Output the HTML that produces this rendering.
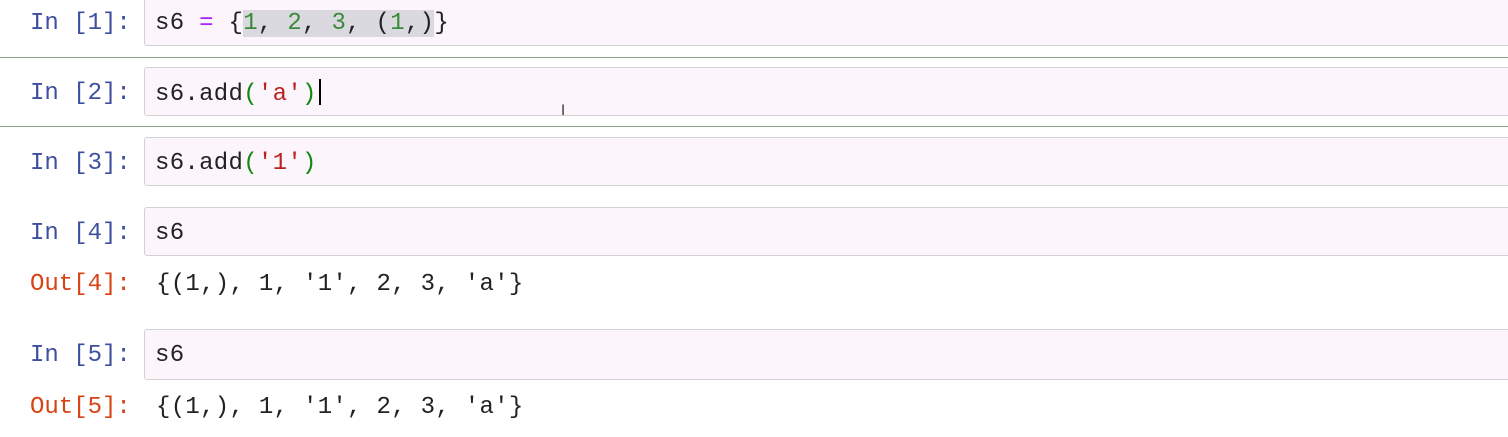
<!DOCTYPE html>
<html><head><style>
body{margin:0;width:1508px;height:437px;background:#fff;position:relative;overflow:hidden;font-family:"Liberation Mono","Courier New",monospace;font-size:24px;}
.box{position:absolute;left:144px;width:1380px;height:49px;background:#fcf5fc;border:1px solid #d2d2d2;border-radius:3px;box-sizing:border-box;}
.p{position:absolute;left:30px;color:#3f4f9f;line-height:30px;}
.o{color:#d84315}
.t{position:absolute;left:155px;line-height:30px;color:#222;letter-spacing:0.3px}
.g{position:absolute;left:0;width:1508px;height:1px;background:#86ab86;}
.n{color:#3a8a3a}.op{color:#aa22ff}.s{color:#ba2121}.br{color:#118811}
.sel{background:#d9d9df}
</style></head><body>
<div class="box" style="top:-3px"></div>
<div class="p" style="top:9px">In [1]:</div>
<div class="t" style="top:9px">s6 <span class="op">=</span> {<span class="sel"><span class="n">1</span>, <span class="n">2</span>, <span class="n">3</span>, (<span class="n">1</span>,)</span>}</div>
<div class="g" style="top:57px"></div>
<div class="box" style="top:67px"></div>
<div class="p" style="top:79px">In [2]:</div>
<div class="t" style="top:79px">s6.add<span class="br">(</span><span class="s">'a'</span><span class="br">)</span><span style="display:inline-block;width:2px;height:26px;background:#000;vertical-align:-5px;margin-left:2px"></span></div>
<div style="position:absolute;left:561px;top:103px;font-family:'DejaVu Sans';font-size:14px;color:#333">I</div>
<div class="g" style="top:126px"></div>
<div class="box" style="top:137px"></div>
<div class="p" style="top:149px">In [3]:</div>
<div class="t" style="top:149px">s6.add<span class="br">(</span><span class="s">'1'</span><span class="br">)</span></div>
<div class="box" style="top:207px"></div>
<div class="p" style="top:219px">In [4]:</div>
<div class="t" style="top:219px">s6</div>
<div class="p o" style="top:270px">Out[4]:</div>
<div class="t" style="top:270px;left:156px">{(1,), 1, '1', 2, 3, 'a'}</div>
<div class="box" style="top:329px;height:51px"></div>
<div class="p" style="top:341px">In [5]:</div>
<div class="t" style="top:341px">s6</div>
<div class="p o" style="top:393px">Out[5]:</div>
<div class="t" style="top:393px;left:156px">{(1,), 1, '1', 2, 3, 'a'}</div>
</body></html>
